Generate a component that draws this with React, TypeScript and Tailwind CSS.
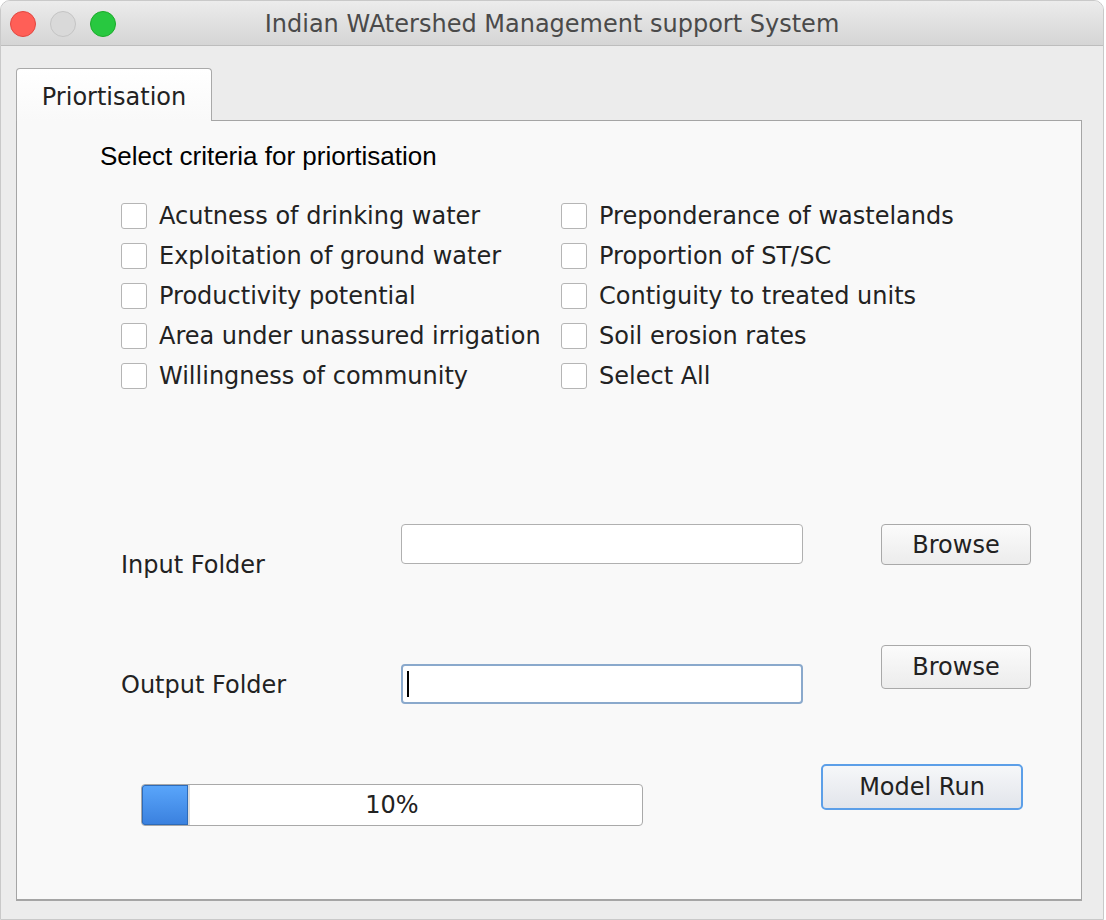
import React from 'react';

const left = [
  'Acutness of drinking water',
  'Exploitation of ground water',
  'Productivity potential',
  'Area under unassured irrigation',
  'Willingness of community',
];
const right = [
  'Preponderance of wastelands',
  'Proportion of ST/SC',
  'Contiguity to treated units',
  'Soil erosion rates',
  'Select All',
];

const CheckRow: React.FC<{ label: string }> = ({ label }) => (
  <label className="flex h-[40px] items-center gap-[12px]">
    <span className="h-[26px] w-[26px] shrink-0 rounded-[3px] border border-[#b5b5b5] bg-white" />
    <span className="whitespace-nowrap text-[24px] leading-none text-[#222]">{label}</span>
  </label>
);

const MacButton: React.FC<{ label: string; className?: string }> = ({ label, className }) => (
  <button
    className={`rounded-[4px] border border-[#a9a9a9] bg-gradient-to-b from-[#fbfbfb] to-[#ececec] text-[24px] leading-none text-[#222] ${className ?? ''}`}
  >
    {label}
  </button>
);

export default function App() {
  return (
    <div
      className="h-[920px] w-[1106px] bg-white"
      style={{ fontFamily: '"DejaVu Sans", "Noto Sans", sans-serif' }}
    >
      <div className="flex h-[920px] w-[1104px] flex-col overflow-hidden rounded-t-[10px] border border-[#c9c9c9] bg-[#ececec]">
        {/* title bar */}
        <div className="relative flex h-[45px] shrink-0 items-center justify-center border-b border-[#bdbdbd] bg-gradient-to-b from-[#ececec] to-[#d5d5d5] pt-[2px]">
          <div className="absolute left-[9px] top-[10px] flex gap-[14px]">
            <span className="h-[26px] w-[26px] rounded-full border border-[#e2463f] bg-[#ff5f57]" />
            <span className="h-[26px] w-[26px] rounded-full border border-[#c4c4c4] bg-[#d9d9d9]" />
            <span className="h-[26px] w-[26px] rounded-full border border-[#1aab29] bg-[#28c840]" />
          </div>
          <span className="text-[24px] leading-none text-[#4a4a4a]">Indian WAtershed Management support System</span>
        </div>

        {/* body */}
        <div className="pl-[15px] pt-[22px]">
          {/* tab */}
          <div className="relative z-10 mb-[-1px] flex h-[53px] w-[196px] items-center justify-center rounded-t-[4px] border border-b-0 border-[#a9a9a9] bg-gradient-to-b from-white to-[#f9f9f9] pt-[4px]">
            <span className="text-[24px] leading-none text-[#222]">Priortisation</span>
          </div>

          {/* panel */}
          <div className="h-[781px] w-[1066px] border border-b-2 border-[#a5a5a5] bg-[#f9f9f9]">
            <div
              className="ml-[83px] mt-[20px] h-[30px] text-[26px] leading-[30px] text-black"
              style={{ fontFamily: '"Liberation Sans", Arial, sans-serif' }}
            >
              Select criteria for priortisation
            </div>

            <div className="ml-[104px] mt-[25px] grid w-[900px] grid-cols-[440px_1fr]">
              <div className="flex flex-col">
                {left.map(l => (
                  <CheckRow key={l} label={l} />
                ))}
              </div>
              <div className="flex flex-col">
                {right.map(l => (
                  <CheckRow key={l} label={l} />
                ))}
              </div>
            </div>

            {/* input folder */}
            <div className="ml-[104px] mt-[128px] flex items-start">
              <span className="mt-[26px] h-[30px] w-[280px] text-[24px] leading-[30px] text-[#222]">Input Folder</span>
              <div className="h-[40px] w-[402px] rounded-[4px] border border-[#b0b0b0] bg-white" />
              <MacButton label="Browse" className="ml-[78px] h-[41px] w-[150px]" />
            </div>

            {/* output folder */}
            <div className="ml-[104px] mt-[65px] flex items-start">
              <span className="mt-[25px] h-[30px] w-[280px] text-[24px] leading-[30px] text-[#222]">Output Folder</span>
              <div className="mt-[19px] flex h-[40px] w-[402px] items-center rounded-[4px] border-2 border-[#8aa9cc] bg-white pl-[4px]">
                <span className="h-[26px] w-[2px] bg-black" />
              </div>
              <MacButton label="Browse" className="ml-[78px] h-[44px] w-[150px]" />
            </div>

            {/* progress and run */}
            <div className="ml-[124px] mt-[60px] flex items-start">
              <div className="relative mt-[20px] flex h-[42px] w-[502px] overflow-hidden rounded-[4px] border border-[#a9a9a9] bg-white">
                <div className="h-full w-[48px] rounded-l-[3px] border-r-2 border-[#dcdcdc] bg-gradient-to-b from-[#5aa6fb] to-[#3a80de] shadow-[inset_0_0_0_1px_#2e6bb8]" />
                <span className="absolute inset-0 flex items-center justify-center text-[24px] leading-none text-[#222]">10%</span>
              </div>
              <button className="ml-[178px] h-[46px] w-[202px] rounded-[5px] border-2 border-[#5c9fe8] bg-gradient-to-b from-[#f6f7f9] to-[#e2e5eb] text-[24px] leading-none text-[#222]">
                Model Run
              </button>
            </div>
          </div>
        </div>
      </div>
    </div>
  );
}
